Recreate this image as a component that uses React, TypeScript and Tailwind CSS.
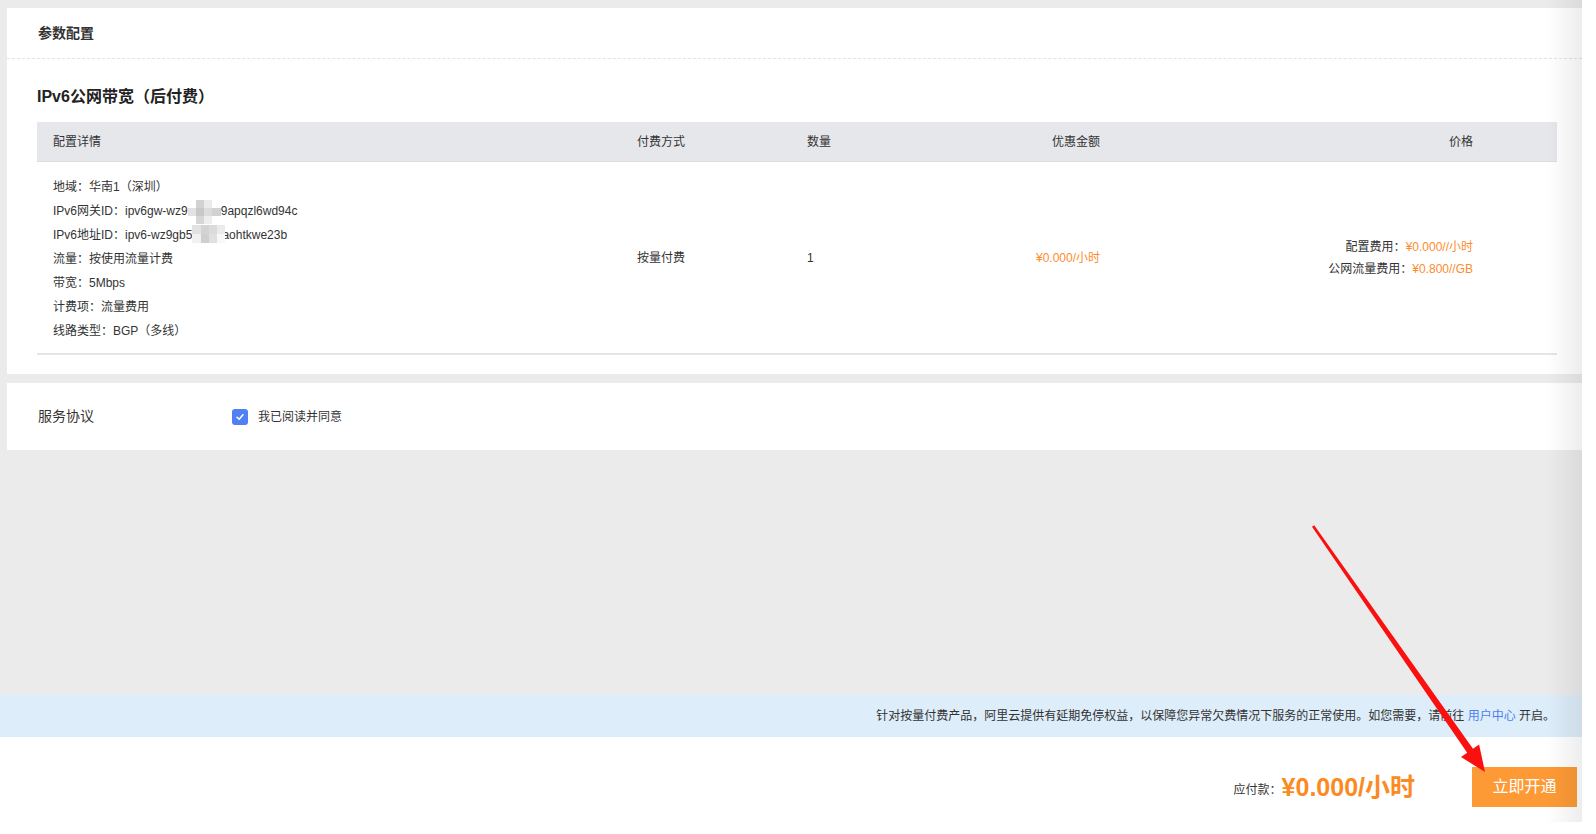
import React from "react";

const Mosaic1 = () => (
  <span className="relative z-10 inline-block w-[33px] h-[12px] align-middle">
    <span className="absolute left-0 top-[-6px] w-[33px] h-[24px] grid grid-cols-4 grid-rows-3">
      <span className="bg-white" />
      <span className="bg-[#d2d2d2]" />
      <span className="bg-[#ebebeb]" />
      <span className="bg-white" />
      <span className="bg-[#e2e2e2]" />
      <span className="bg-[#c8c8c8]" />
      <span className="bg-[#dcdcdc]" />
      <span className="bg-[#d2d2d2]" />
      <span className="bg-white" />
      <span className="bg-[#d6d6d6]" />
      <span className="bg-[#eeeeee]" />
      <span className="bg-white" />
    </span>
  </span>
);

const Mosaic2 = () => (
  <span className="relative z-10 inline-block w-[33px] h-[12px] align-middle mr-[-3px]">
    <span className="absolute left-0 top-[-5px] w-[33px] h-[18px] grid grid-cols-4 grid-rows-2">
      <span className="bg-[#e2e2e2]" />
      <span className="bg-[#d3d3d3]" />
      <span className="bg-[#dbdbdb]" />
      <span className="bg-[#ebebeb]" />
      <span className="bg-[#f1f1f1]" />
      <span className="bg-[#cfcfcf]" />
      <span className="bg-[#e0e0e0]" />
      <span className="bg-[#f8f8f8]" />
    </span>
  </span>
);

const cols = "grid grid-cols-[584px_170px_169px_156px_373px_68px]";

export default function App() {
  return (
    <div className="relative w-[1596px] h-[834px] bg-white overflow-hidden font-['Liberation_Sans','Noto_Sans_CJK_SC',sans-serif] text-[#333]">
      <div className="relative w-[1582px] h-[822px] bg-[#ebebeb] flex flex-col pt-[8px]">
        {/* Panel 1 */}
        <div className="ml-[7px] bg-white flex flex-col pb-[19px]">
          <div className="h-[51px] flex items-center pl-[31px] border-b border-dashed border-[#e3e3e3]">
            <span className="text-[14px] font-semibold text-[#333]">参数配置</span>
          </div>
          <div className="px-[30px]">
            <div className="mt-[26px] text-[16px] leading-[24px] font-semibold text-[#222]">
              IPv6公网带宽（后付费）
            </div>
            <div className="mt-[13px] w-[1520px] text-[12px]">
              <div className={`${cols} h-[40px] items-center bg-[#e6e7eb] border-b border-[#dcdde2]`}>
                <div className="pl-[16px]">配置详情</div>
                <div className="pl-[16px]">付费方式</div>
                <div className="pl-[16px]">数量</div>
                <div className="pr-[16px] text-right">优惠金额</div>
                <div className="pr-[16px] text-right">价格</div>
                <div />
              </div>
              <div className={`${cols} items-center border-b-2 border-[#e4e5ea]`}>
                <div className="pl-[16px] pt-[13px] pb-[10px] leading-[24px]">
                  <div className="h-[24px]">地域：华南1（深圳）</div>
                  <div className="h-[24px] whitespace-nowrap">
                    IPv6网关ID：ipv6gw-wz9<Mosaic1 />9apqzl6wd94c
                  </div>
                  <div className="h-[24px] whitespace-nowrap">
                    IPv6地址ID：ipv6-wz9gb5<Mosaic2 />aohtkwe23b
                  </div>
                  <div className="h-[24px]">流量：按使用流量计费</div>
                  <div className="h-[24px]">带宽：5Mbps</div>
                  <div className="h-[24px]">计费项：流量费用</div>
                  <div className="h-[24px]">线路类型：BGP（多线）</div>
                </div>
                <div className="pl-[16px]">按量付费</div>
                <div className="pl-[16px]">1</div>
                <div className="pr-[16px] text-right text-[#fd8c2e]">¥0.000/小时</div>
                <div className="pr-[16px] text-right leading-[22px]">
                  <div>
                    配置费用：<span className="text-[#fd8c2e]">¥0.000//小时</span>
                  </div>
                  <div>
                    公网流量费用：<span className="text-[#fd8c2e]">¥0.800//GB</span>
                  </div>
                </div>
                <div />
              </div>
            </div>
          </div>
        </div>

        {/* Panel 2 */}
        <div className="ml-[7px] mt-[9px] h-[67px] bg-white flex items-center pl-[31px]">
          <span className="w-[194px] text-[14px] text-[#333]">服务协议</span>
          <span className="w-[16px] h-[16px] rounded-[3px] bg-[#5080f4] flex items-center justify-center">
            <svg width="10" height="10" viewBox="0 0 10 10" fill="none">
              <path d="M2 5.2 L4.2 7.3 L8 2.8" stroke="white" strokeWidth="1.5" strokeLinecap="round" strokeLinejoin="round" />
            </svg>
          </span>
          <span className="ml-[10px] text-[12px] text-[#333]">我已阅读并同意</span>
        </div>

        <div className="flex-1" />

        {/* Notice bar */}
        <div className="h-[42px] bg-[#ddedf9] flex items-center justify-end pr-[27px] text-[12px] text-[#333]">
          <span>
            针对按量付费产品，阿里云提供有延期免停权益，以保障您异常欠费情况下服务的正常使用。如您需要，请前往{" "}
            <span className="text-[#4d7ff0]">用户中心</span> 开启。
          </span>
        </div>

        {/* Bottom bar */}
        <div className="h-[85px] bg-white flex items-start justify-end pr-[5px] pt-[30px]">
          <div className="flex items-center h-[40px]">
            <span className="text-[12px] text-[#333] mt-[6px]">应付款：</span>
            <span className="text-[25px] font-semibold text-[#fc8a22] leading-[32px] mr-[57px]">¥0.000/小时</span>
          </div>
          <button className="w-[105px] h-[40px] bg-[#fd9a36] text-white text-[16px]">立即开通</button>
        </div>

        {/* right edge shadow */}
        <div className="pointer-events-none absolute top-0 right-0 bottom-0 w-[36px] bg-gradient-to-r from-transparent to-black/[0.07]" />
      </div>

      {/* red arrow annotation */}
      <svg className="pointer-events-none absolute left-0 top-0" width="1596" height="834" viewBox="0 0 1596 834">
        <polygon
          points="1312,526.7 1314.2,525.3 1473,748.7 1479.1,744.4 1485,772 1461,757 1467.2,752.7"
          fill="#fb1010"
        />
      </svg>
    </div>
  );
}
